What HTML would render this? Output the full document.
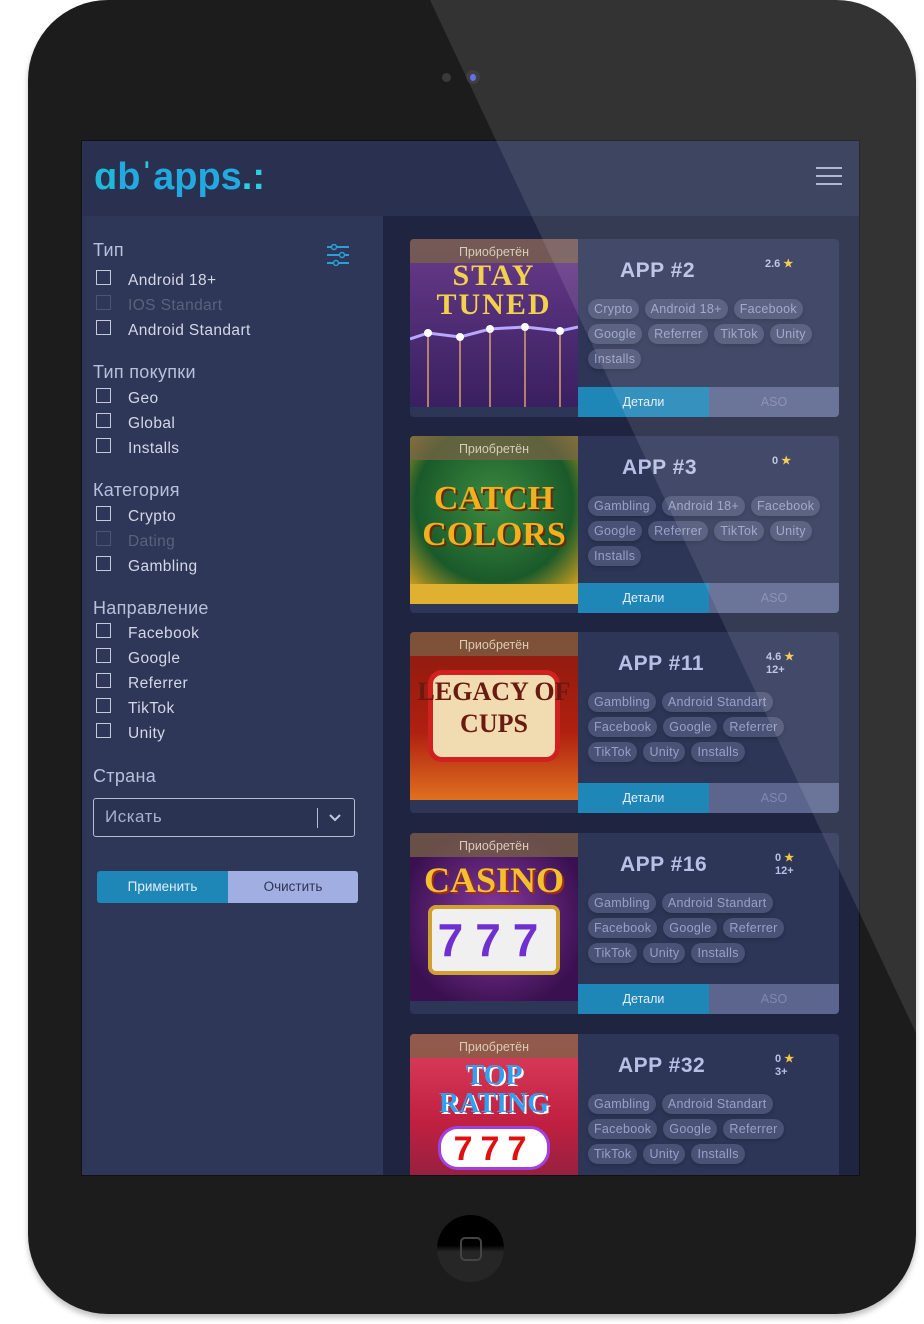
<!DOCTYPE html>
<html><head><meta charset="utf-8"><style>
*{box-sizing:border-box;margin:0;padding:0}
body{width:924px;height:1324px;background:#fff;position:relative;overflow:hidden;font-family:"Liberation Sans",sans-serif}
.abs{position:absolute}
.dev{left:28px;top:0;width:888px;height:1314px;background:#1c1c1c;border-radius:80px;box-shadow:0 4px 6px rgba(0,0,0,.25)}
.screen{left:81px;top:140px;width:779px;height:1036px;background:#1f2540;overflow:hidden;border:1px solid #111}
.hdr{left:0;top:0;width:779px;height:75px;background:#293050}
.side{left:0;top:75px;width:301px;height:961px;background:#2e3757}
.h{color:#b9c0dd;font-size:18px;letter-spacing:.3px}
.cb{width:15px;height:15px;border:1.5px solid #c4c9de}
.lbl{color:#d3d7e6;font-size:15.5px;letter-spacing:.4px}
.dis .cb{border-color:#4b5474}.dis .lbl{color:#59627f}
.card{left:328px;width:429px;background:#2e3658;border-radius:4px;overflow:hidden}
.img{left:0;top:0;width:168px;height:168px}
.bought{left:0;top:0;width:168px;height:24px;background:rgba(120,100,70,.75);color:#d8cdb8;font-size:12.5px;text-align:center;line-height:26px}
.title{color:#b8c0e6;font-size:21px;font-weight:bold;letter-spacing:.5px}
.rate{color:#b8c0e6;font-size:11px;font-weight:bold;line-height:13px}
.star{color:#f5c842}
.tags{left:178px;width:234px;display:flex;flex-wrap:wrap;gap:5px 6px}
.tag{background:#4a5275;color:#98a1c6;font-size:12.5px;border-radius:11px;padding:2px 6px;line-height:16px;letter-spacing:.3px;box-shadow:0 2px 4px rgba(0,0,0,.2)}
.bd{left:168px;width:131px;height:30px;background:#1f86b8;color:#e6eef8;font-size:12.5px;text-align:center;line-height:30px}
.ba{left:299px;width:130px;height:30px;background:#5b658e;color:#8089ad;font-size:12.5px;text-align:center;line-height:30px}
.gt{font-family:"Liberation Serif",serif;font-weight:bold;text-align:center;width:168px;left:0}
</style></head><body>
<div class="abs dev"></div>
<div class="abs" style="left:442px;top:73px;width:9px;height:9px;border-radius:50%;background:#3a3a3a"></div>
<div class="abs" style="left:466px;top:70px;width:14px;height:14px;border-radius:50%;background:#2a2a2a"></div>
<div class="abs" style="left:470px;top:74px;width:6px;height:7px;border-radius:50%;background:#5060f0"></div>
<div class="abs" style="left:437px;top:1215px;width:67px;height:67px;border-radius:50%;background:linear-gradient(#000 45%,#262626 55%)"></div>
<div class="abs" style="left:460px;top:1237px;width:22px;height:24px;border:2px solid #444;border-radius:5px"></div>

<div class="abs screen">
 <div class="abs hdr">
  <div class="abs" style="left:12px;top:15px;font-size:38px;font-weight:bold;color:#22a9e0;font-family:'Liberation Sans',sans-serif">
   <span style="color:#20b8d8">ɑ</span>b<span style="color:#2bc6d8">ˈ</span>apps<span style="color:#2bd0e0">.:</span></div>
  <div class="abs" style="left:734px;top:26px;width:26px;height:2px;background:#aab0c8"></div>
  <div class="abs" style="left:734px;top:34px;width:26px;height:2px;background:#aab0c8"></div>
  <div class="abs" style="left:734px;top:42px;width:26px;height:2px;background:#aab0c8"></div>
 </div>
 <div class="abs side">
  <div class="abs h" style="left:11px;top:24px">Тип</div>
  <svg class="abs" style="left:245px;top:28px" width="22" height="22"><g stroke="#2aa0d6" stroke-width="2"><line x1="0" y1="3" x2="22" y2="3"/><line x1="0" y1="11" x2="22" y2="11"/><line x1="0" y1="19" x2="22" y2="19"/></g><g fill="#2e3757" stroke="#2aa0d6" stroke-width="1.5"><circle cx="7" cy="3" r="2.5"/><circle cx="15" cy="11" r="2.5"/><circle cx="9" cy="19" r="2.5"/></g></svg>
  <div class="abs" style="left:14px;top:54px"><div class="cb"></div></div><div class="abs lbl" style="left:46px;top:56px">Android 18+</div>
  <div class="abs dis" style="left:14px;top:79px"><div class="cb"></div><div class="abs lbl" style="left:32px;top:2px;white-space:nowrap">IOS Standart</div></div>
  <div class="abs" style="left:14px;top:104px"><div class="cb"></div></div><div class="abs lbl" style="left:46px;top:106px">Android Standart</div>

  <div class="abs h" style="left:11px;top:146px">Тип покупки</div>
  <div class="abs" style="left:14px;top:172px"><div class="cb"></div></div><div class="abs lbl" style="left:46px;top:174px">Geo</div>
  <div class="abs" style="left:14px;top:197px"><div class="cb"></div></div><div class="abs lbl" style="left:46px;top:199px">Global</div>
  <div class="abs" style="left:14px;top:222px"><div class="cb"></div></div><div class="abs lbl" style="left:46px;top:224px">Installs</div>

  <div class="abs h" style="left:11px;top:264px">Категория</div>
  <div class="abs" style="left:14px;top:290px"><div class="cb"></div></div><div class="abs lbl" style="left:46px;top:292px">Crypto</div>
  <div class="abs dis" style="left:14px;top:315px"><div class="cb"></div><div class="abs lbl" style="left:32px;top:2px">Dating</div></div>
  <div class="abs" style="left:14px;top:340px"><div class="cb"></div></div><div class="abs lbl" style="left:46px;top:342px">Gambling</div>

  <div class="abs h" style="left:11px;top:382px">Направление</div>
  <div class="abs" style="left:14px;top:407px"><div class="cb"></div></div><div class="abs lbl" style="left:46px;top:409px">Facebook</div>
  <div class="abs" style="left:14px;top:432px"><div class="cb"></div></div><div class="abs lbl" style="left:46px;top:434px">Google</div>
  <div class="abs" style="left:14px;top:457px"><div class="cb"></div></div><div class="abs lbl" style="left:46px;top:459px">Referrer</div>
  <div class="abs" style="left:14px;top:482px"><div class="cb"></div></div><div class="abs lbl" style="left:46px;top:484px">TikTok</div>
  <div class="abs" style="left:14px;top:507px"><div class="cb"></div></div><div class="abs lbl" style="left:46px;top:509px">Unity</div>

  <div class="abs h" style="left:11px;top:550px">Страна</div>
  <div class="abs" style="left:11px;top:582px;width:262px;height:39px;border:1px solid #b6bcd2;border-radius:3px;background:#2b3353"></div>
  <div class="abs" style="left:23px;top:591px;color:#a9b1d3;font-size:17px;letter-spacing:.5px">Искать</div>
  <div class="abs" style="left:235px;top:592px;width:1px;height:20px;background:#b6bcd2"></div>
  <svg class="abs" style="left:246px;top:597px" width="14" height="10"><path d="M2 2 L7 7 L12 2" stroke="#c3c8dc" stroke-width="2" fill="none"/></svg>

  <div class="abs" style="left:15px;top:655px;width:131px;height:32px;background:#1f86b8;border-radius:3px 0 0 3px;color:#e3ecf5;font-size:13.5px;text-align:center;line-height:32px">Применить</div>
  <div class="abs" style="left:146px;top:655px;width:130px;height:32px;background:#a1aee2;border-radius:0 3px 3px 0;color:#2f3550;font-size:13.5px;text-align:center;line-height:32px">Очистить</div>
 </div>

 <div class="abs card" style="top:98px;height:178px">
  <div class="abs img" style="background:linear-gradient(#6a3a8a,#4a2a70 60%,#3a2060)">
   <div class="abs gt" style="top:22px;color:#f2d24a;font-size:30px;line-height:29px;letter-spacing:2px">STAY<br>TUNED</div>
   <svg class="abs" style="left:0;top:80px" width="168" height="88"><polyline points="0,20 18,14 50,18 80,10 115,8 150,12 168,8" stroke="#b8a8ff" stroke-width="3" fill="none"/><g stroke="#d8a070" stroke-width="1.5"><line x1="18" y1="14" x2="18" y2="88"/><line x1="50" y1="18" x2="50" y2="88"/><line x1="80" y1="10" x2="80" y2="88"/><line x1="115" y1="8" x2="115" y2="88"/><line x1="150" y1="12" x2="150" y2="88"/></g><g fill="#fff"><circle cx="18" cy="14" r="4"/><circle cx="50" cy="18" r="4"/><circle cx="80" cy="10" r="4"/><circle cx="115" cy="8" r="4"/><circle cx="150" cy="12" r="4"/></g></svg>
   <div class="abs bought">Приобретён</div>
  </div>
  <div class="abs title" style="left:210px;top:20px">APP #2</div>
  <div class="abs rate" style="left:355px;top:19px">2.6 <span class="star">★</span></div>
  <div class="abs tags" style="top:60px"><span class="tag">Crypto</span><span class="tag">Android 18+</span><span class="tag">Facebook</span><span class="tag">Google</span><span class="tag">Referrer</span><span class="tag">TikTok</span><span class="tag">Unity</span><span class="tag">Installs</span></div>
  <div class="abs bd" style="top:148px">Детали</div><div class="abs ba" style="top:148px">ASO</div>
 </div>
 <div class="abs card" style="top:295px;height:177px">
  <div class="abs img" style="background:radial-gradient(circle at 50% 40%,#3a8a40,#1a5a2a 60%,#d0a020 90%)">
   <div class="abs gt" style="top:45px;color:#f0b020;font-size:34px;line-height:36px;text-shadow:2px 2px 0 #6a2a00">CATCH<br>COLORS</div>
   <div class="abs" style="left:0;top:148px;width:168px;height:20px;background:#e0b030"></div>
   <div class="abs bought">Приобретён</div>
  </div>
  <div class="abs title" style="left:212px;top:20px">APP #3</div>
  <div class="abs rate" style="left:362px;top:19px">0 <span class="star">★</span></div>
  <div class="abs tags" style="top:60px"><span class="tag">Gambling</span><span class="tag">Android 18+</span><span class="tag">Facebook</span><span class="tag">Google</span><span class="tag">Referrer</span><span class="tag">TikTok</span><span class="tag">Unity</span><span class="tag">Installs</span></div>
  <div class="abs bd" style="top:147px">Детали</div><div class="abs ba" style="top:147px">ASO</div>
 </div>
 <div class="abs card" style="top:491px;height:181px">
  <div class="abs img" style="background:linear-gradient(#8a1a10,#b02010 60%,#e07020)">
   <div class="abs" style="left:18px;top:38px;width:132px;height:92px;background:#f0dcb0;border:5px solid #d02020;border-radius:14px"></div>
   <div class="abs gt" style="top:44px;color:#6a1a10;font-size:26px;line-height:32px">LEGACY OF<br>CUPS</div>
   <div class="abs bought">Приобретён</div>
  </div>
  <div class="abs title" style="left:208px;top:20px">APP #11</div>
  <div class="abs rate" style="left:356px;top:19px">4.6 <span class="star">★</span><br>12+</div>
  <div class="abs tags" style="top:60px"><span class="tag">Gambling</span><span class="tag">Android Standart</span><span class="tag">Facebook</span><span class="tag">Google</span><span class="tag">Referrer</span><span class="tag">TikTok</span><span class="tag">Unity</span><span class="tag">Installs</span></div>
  <div class="abs bd" style="top:151px">Детали</div><div class="abs ba" style="top:151px">ASO</div>
 </div>
 <div class="abs card" style="top:692px;height:181px">
  <div class="abs img" style="background:radial-gradient(circle at 50% 50%,#8a3aa0,#3a1050 80%)">
   <div class="abs gt" style="top:26px;color:#f5c030;font-size:36px;text-shadow:2px 2px 0 #a03010">CASINO</div>
   <div class="abs" style="left:18px;top:72px;width:132px;height:70px;background:#f0f0f0;border:4px solid #d0a030;border-radius:8px;color:#7030d0;font-size:46px;font-weight:bold;text-align:center;line-height:62px;letter-spacing:12px">777</div>
   <div class="abs bought">Приобретён</div>
  </div>
  <div class="abs title" style="left:210px;top:20px">APP #16</div>
  <div class="abs rate" style="left:365px;top:19px">0 <span class="star">★</span><br>12+</div>
  <div class="abs tags" style="top:60px"><span class="tag">Gambling</span><span class="tag">Android Standart</span><span class="tag">Facebook</span><span class="tag">Google</span><span class="tag">Referrer</span><span class="tag">TikTok</span><span class="tag">Unity</span><span class="tag">Installs</span></div>
  <div class="abs bd" style="top:151px">Детали</div><div class="abs ba" style="top:151px">ASO</div>
 </div>
 <div class="abs card" style="top:893px;height:160px">
  <div class="abs img" style="height:150px;background:linear-gradient(#e04060,#c02040 60%,#902040)">
   <div class="abs gt" style="top:28px;color:#30a0f0;font-size:28px;line-height:28px;text-shadow:2px 2px 0 #fff">TOP<br>RATING</div>
   <div class="abs" style="left:28px;top:92px;width:112px;height:44px;background:#fff;border:3px solid #a040e0;border-radius:20px;color:#e01010;font-size:34px;font-weight:bold;text-align:center;line-height:40px;letter-spacing:8px">777</div>
   <div class="abs bought">Приобретён</div>
  </div>
  <div class="abs title" style="left:208px;top:20px">APP #32</div>
  <div class="abs rate" style="left:365px;top:19px">0 <span class="star">★</span><br>3+</div>
  <div class="abs tags" style="top:60px"><span class="tag">Gambling</span><span class="tag">Android Standart</span><span class="tag">Facebook</span><span class="tag">Google</span><span class="tag">Referrer</span><span class="tag">TikTok</span><span class="tag">Unity</span><span class="tag">Installs</span></div>
 </div>
</div>
<svg class="abs" style="left:0;top:0" width="924" height="1324"><polygon points="430,0 924,0 924,1050" fill="rgba(255,255,255,0.1)"/></svg>
</body></html>
